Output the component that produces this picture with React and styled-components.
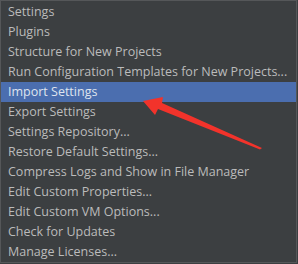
import React from "react";
import styled, { createGlobalStyle } from "styled-components";

const GlobalStyle = createGlobalStyle`
  html, body {
    margin: 0;
    padding: 0;
    background: #3c3f41;
  }
`;

const items = [
  "Settings",
  "Plugins",
  "Structure for New Projects",
  "Run Configuration Templates for New Projects...",
  "Import Settings",
  "Export Settings",
  "Settings Repository...",
  "Restore Default Settings...",
  "Compress Logs and Show in File Manager",
  "Edit Custom Properties...",
  "Edit Custom VM Options...",
  "Check for Updates",
  "Manage Licenses...",
];

const App = () => {
  return (
    <>
      <GlobalStyle />
      <Screen>
        <Menu>
          {items.map((label, i) => (
            <Item key={label} $active={i === 4}>
              {label}
            </Item>
          ))}
        </Menu>
        <Arrow viewBox="0 0 298 264" width="298" height="264">
          <polygon
            points="143,101 163,97 162,103 262,148 260,149.5 158,109 155,115"
            fill="#f2332b"
          />
        </Arrow>
      </Screen>
    </>
  );
};

const Screen = styled.div`
  position: relative;
  width: 298px;
  height: 264px;
  overflow: hidden;
  background: #3c3f41;
`;

const Menu = styled.ul`
  list-style: none;
  margin: 0;
  padding: 1px 0 0;
  box-sizing: border-box;
  width: 297px;
  height: 263px;
  border: 1px solid #555759;
  background: #3c3f41;
`;

const Item = styled.li`
  height: 20px;
  line-height: 20px;
  padding-left: 7px;
  font-family: "Open Sans", "Noto Sans", sans-serif;
  font-size: 12.5px;
  white-space: nowrap;
  color: ${(p) => (p.$active ? "#dfe4ee" : "#bbbbbb")};
  background: ${(p) => (p.$active ? "#4b6eaf" : "transparent")};
`;

const Arrow = styled.svg`
  position: absolute;
  left: 0;
  top: 0;
  pointer-events: none;
`;

export default App;
